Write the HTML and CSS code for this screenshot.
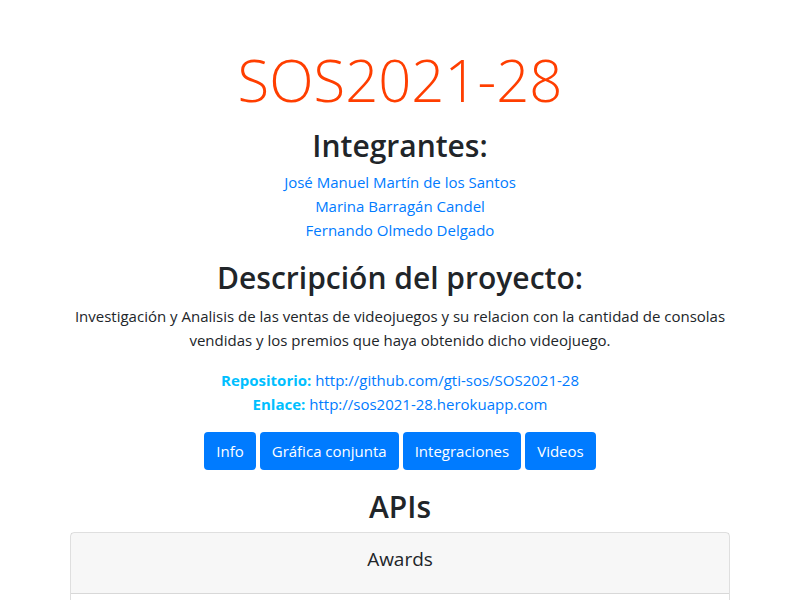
FILE: index.html
```html
<!DOCTYPE html>
<html lang="es">
<head>
<meta charset="utf-8">
<title>SOS2021-28</title>
<link rel="stylesheet" href="styles.css">
</head>
<body>
<main class="main">
  <h1 class="title">SOS2021-28</h1>
  <h2 class="heading">Integrantes:</h2>
  <div class="members">
    <a href="#">José Manuel Martín de los Santos</a>
    <a href="#">Marina Barragán Candel</a>
    <a href="#">Fernando Olmedo Delgado</a>
  </div>
  <h2 class="heading">Descripción del proyecto:</h2>
  <p class="desc">Investigación y Analisis de las ventas de videojuegos y su relacion con la cantidad de consolas vendidas y los premios que haya obtenido dicho videojuego.</p>
  <div class="links">
    <div><strong class="label">Repositorio:</strong> <a href="#">http://github.com/gti-sos/SOS2021-28</a></div>
    <div><strong class="label">Enlace:</strong> <a href="#">http://sos2021-28.herokuapp.com</a></div>
  </div>
  <div class="buttons">
    <a class="btn" href="#">Info</a>
    <a class="btn" href="#">Gráfica conjunta</a>
    <a class="btn" href="#">Integraciones</a>
    <a class="btn" href="#">Videos</a>
  </div>
  <h2 class="heading apis">APIs</h2>
  <div class="card">
    <div class="card-header">Awards</div>
    <div class="card-body"></div>
  </div>
</main>
</body>
</html>
```

FILE: styles.css
```css
* { box-sizing: border-box; }
html, body { margin: 0; padding: 0; background: #fff; }
body {
  font-family: "Open Sans", "Noto Sans", sans-serif;
  font-size: 15px;
  line-height: 24px;
  color: #212529;
}
a { color: #007bff; text-decoration: none; }
.main {
  width: 660px;
  margin: 0 auto;
  padding-top: 40px;
  text-align: center;
}
.title {
  margin: 0 0 7px;
  color: #ff3e00;
  font-size: 58px;
  font-weight: 300;
  line-height: 80px;
}
.heading {
  margin: 0 0 5px;
  font-size: 30px;
  font-weight: 600;
  line-height: 38px;
}
.members {
  display: flex;
  flex-direction: column;
  align-items: center;
  margin-bottom: 17px;
}
.desc { margin: 7px 0 16px; }
.links { margin-bottom: 16px; }
.label { color: #00bfff; font-weight: 700; }
.buttons {
  display: flex;
  justify-content: center;
  gap: 4px;
  margin-bottom: 18px;
}
.btn {
  display: inline-block;
  background: #007bff;
  color: #fff;
  border-radius: 4px;
  padding: 7px 12px;
  line-height: 24px;
}
.apis { margin-bottom: 6px; }
.card {
  border: 1px solid rgba(0,0,0,.125);
  border-radius: 4px;
  height: 100px;
}
.card-header {
  background: rgba(0,0,0,.03);
  border-bottom: 1px solid rgba(0,0,0,.125);
  padding: 12px 16px 20px;
  font-size: 19px;
  font-weight: 500;
  line-height: 28px;
}
```
